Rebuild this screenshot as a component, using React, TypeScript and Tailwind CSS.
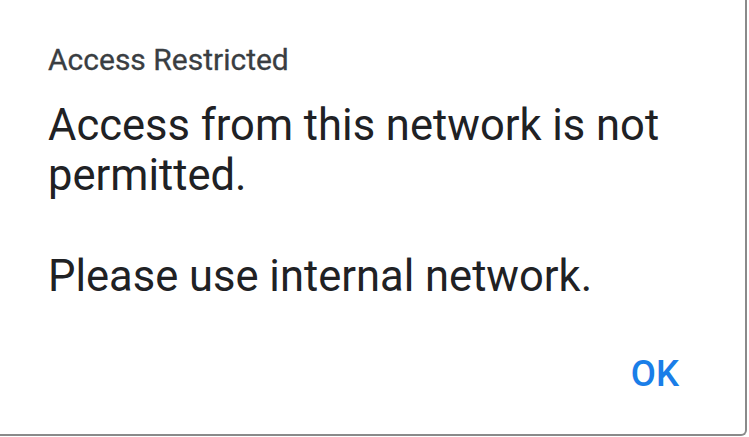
import React from 'react';

export default function App() {
  return (
    <div className="w-[749px] h-[437px] bg-white overflow-hidden" style={{ fontFamily: 'Roboto, "Noto Sans", sans-serif' }}>
      <div className="w-[747px] h-[436px] border-r-2 border-b-2 border-[#8a8a8a] rounded-br-[6px] flex flex-col">
        {/* Header */}
        <div className="pt-[43px] pl-[48px]">
          <h1 className="text-[30px] leading-[34px] font-normal text-[#3a3e42] [-webkit-text-stroke:0.3px_#3a3e42]">Access Restricted</h1>
        </div>

        {/* Message */}
        <div className="pl-[48px] pt-[24px] pr-[40px] text-[43.5px] leading-[50px] text-[#202124]">
          <p>Access from this network is not permitted.</p>
          <p className="mt-[51px]">Please use internal network.</p>
        </div>

        {/* Actions */}
        <div className="flex-1 flex justify-end items-end pr-[66px] pb-[40px]">
          <button className="text-[36.5px] leading-[40px] font-medium text-[#1a7ee8]">OK</button>
        </div>
      </div>
    </div>
  );
}
